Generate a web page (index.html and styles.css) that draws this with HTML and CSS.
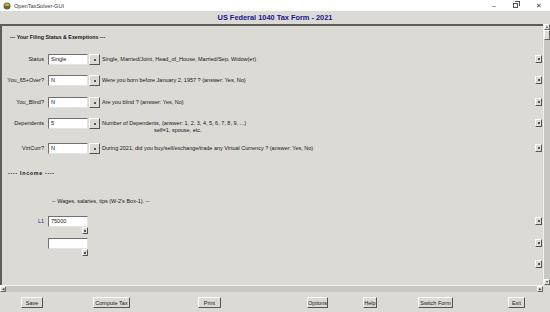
FILE: index.html
```html
<!DOCTYPE html>
<html lang="en">
<head>
  <meta charset="UTF-8" />
  <title>OpenTaxSolver-GUI</title>
  <link rel="stylesheet" href="styles.css">
</head>
<body>
  <div class="window">
    <div class="titlebar">
      <svg class="app-icon" width="8" height="8" viewBox="0 0 8 8">
        <circle cx="4" cy="4" r="3.5" fill="#3d7a3a" />
        <path d="M1 3 L4 1 L7 3 L4 5 Z" fill="#d9a13b" />
        <circle cx="4" cy="5.5" r="1.4" fill="#b8402f" />
      </svg>
      <span class="app-name">OpenTaxSolver-GUI</span>
      <div class="controls">
        <span>&#8211;</span>
        <span class="restore"></span>
        <span>&#10005;</span>
      </div>
    </div>

    <div class="heading">US Federal 1040 Tax Form - 2021</div>

    <div class="main">
      <div class="content">
        <div class="section first">--- Your Filing Status &amp; Exemptions ---</div>

        <div class="row r1">
          <span class="label">Status</span>
          <span class="entry">Single</span>
          <span class="pick"><i></i></span>
          <span class="desc">Single, Married/Joint, Head_of_House, Married/Sep, Widow(er)</span>
          <span class="side"><i></i></span>
        </div>
        <div class="row r2">
          <span class="label">You_65+Over?</span>
          <span class="entry">N</span>
          <span class="pick"><i></i></span>
          <span class="desc">Were you born before January 2, 1957 ? (answer: Yes, No)</span>
          <span class="side"><i></i></span>
        </div>
        <div class="row r3">
          <span class="label">You_Blind?</span>
          <span class="entry">N</span>
          <span class="pick"><i></i></span>
          <span class="desc">Are you blind ? (answer: Yes, No)</span>
          <span class="side"><i></i></span>
        </div>
        <div class="row r4">
          <span class="label">Dependents</span>
          <span class="entry">5</span>
          <span class="pick"><i></i></span>
          <span class="desc two">Number of Dependents, (answer: 1, 2, 3, 4, 5, 6, 7, 8, 9, ...)<br><span class="indent">self=1, spouse, etc.</span></span>
          <span class="side"><i></i></span>
        </div>
        <div class="row r5">
          <span class="label">VirtCurr?</span>
          <span class="entry">N</span>
          <span class="pick"><i></i></span>
          <span class="desc">During 2021, did you buy/sell/exchange/trade any Virtual Currency ? (answer: Yes, No)</span>
          <span class="side"><i></i></span>
        </div>

        <div class="section income">---- Income ----</div>
        <div class="note">-- Wages, salaries, tips (W-2's Box-1). --</div>

        <div class="row l1">
          <span class="label line">L1</span>
          <span class="entry">75000</span>
          <span class="desc"></span>
          <span class="side"><i></i></span>
        </div>
        <div class="mini-row"><span class="mini"><i></i></span></div>
        <div class="row l1b">
          <span class="label"></span>
          <span class="entry"></span>
          <span class="desc"></span>
          <span class="side"><i></i></span>
        </div>
        <div class="mini-row"><span class="mini"><i></i></span></div>
        <div class="row l2">
          <span class="desc"></span>
          <span class="side"><i></i></span>
        </div>
      </div>

      <div class="vscroll">
        <span class="arrow up">&#9650;</span>
        <span class="thumb"></span>
        <span class="track"></span>
        <span class="arrow down">&#9660;</span>
      </div>

      <div class="hscroll">
        <span class="arrow left">&#9664;</span>
        <span class="track"></span>
        <span class="arrow right">&#9654;</span>
      </div>
      <div class="corner"></div>
    </div>

    <div class="footer">
      <button class="save">Save</button>
      <button class="compute">Compute Tax</button>
      <button class="print">Print</button>
      <button class="options">Options</button>
      <button class="help">Help</button>
      <button class="switch">Switch Form</button>
      <button class="exit">Exit</button>
    </div>
  </div>
</body>
</html>
```

FILE: styles.css
```css
* {
  margin: 0;
  padding: 0;
  box-sizing: border-box;
}
body {
  width: 550px;
  height: 312px;
  overflow: hidden;
  background-color: #dcdad5;
  color: #161616;
  font-family: 'Liberation Sans', Arial, sans-serif;
  font-size: 5.5px;
}
.window {
  display: grid;
  grid-template-rows: 11px 13px 268px 20px;
  height: 312px;
}
.titlebar {
  background: #ffffff;
  display: flex;
  align-items: center;
  padding-left: 3px;
  font-size: 5.6px;
  color: #333;
}
.app-icon {
  margin-right: 3px;
}
.controls {
  margin-left: auto;
  display: flex;
  align-items: center;
  font-size: 7px;
  color: #444;
}
.controls span {
  width: 22px;
  text-align: center;
}
.controls .restore {
  width: 5px;
  height: 5px;
  margin: 0 10px 0 8px;
  border: 1px solid #555;
  box-shadow: 1px -1px 0 0 #fff, 2px -2px 0 0 #555;
}
.heading {
  text-align: center;
  font-size: 7.4px;
  font-weight: bold;
  color: #16168f;
  line-height: 13px;
}
.main {
  display: grid;
  grid-template-columns: 543px 7px;
  grid-template-rows: 261px 7px;
}
.content {
  border-top: 2px solid #5e5d5a;
  border-left: 2px solid #5e5d5a;
  overflow: hidden;
  display: flex;
  flex-direction: column;
}
.section {
  font-weight: bold;
  font-size: 5.3px;
  line-height: 8px;
  height: 8px;
  padding-left: 8px;
}
.section.first {
  margin-top: 7px;
}
.section.income {
  margin-top: 15px;
  padding-left: 6px;
  letter-spacing: 0.7px;
}
.note {
  margin-top: 20px;
  line-height: 8px;
  height: 8px;
  padding-left: 50px;
}
.row {
  display: flex;
  align-items: flex-start;
  height: 11px;
}
.r1 { margin-top: 13px; }
.r2 { margin-top: 10px; }
.r3 { margin-top: 11px; }
.r4 { margin-top: 10px; }
.r5 { margin-top: 14px; }
.l1 { margin-top: 11px; }
.l1b { margin-top: 4px; }
.l2 { margin-top: 3px; }
.label {
  width: 42px;
  text-align: right;
  line-height: 11px;
  margin-right: 4px;
  white-space: nowrap;
}
.label.line {
  color: #2a2a8e;
}
.entry {
  width: 40px;
  height: 11px;
  background: #ffffff;
  border-top: 1px solid #707070;
  border-left: 1px solid #707070;
  border-right: 1px solid #e4e3df;
  border-bottom: 1px solid #e4e3df;
  line-height: 9px;
  padding-left: 2px;
}
.pick {
  width: 11px;
  height: 11px;
  margin-left: 1px;
  border-top: 1px solid #ffffff;
  border-left: 1px solid #ffffff;
  border-right: 1px solid #555;
  border-bottom: 1px solid #555;
  display: flex;
  align-items: center;
  justify-content: center;
}
.pick i,
.side i,
.mini i {
  width: 2px;
  height: 2px;
  background: #555;
}
.desc {
  flex: 1;
  margin-left: 2px;
  line-height: 11px;
  white-space: nowrap;
}
.desc.two {
  line-height: 7px;
  padding-top: 2px;
}
.indent {
  padding-left: 52px;
}
.side {
  width: 7px;
  height: 8px;
  margin-top: 1px;
  margin-right: 1px;
  border-top: 1px solid #ffffff;
  border-left: 1px solid #ffffff;
  border-right: 1px solid #555;
  border-bottom: 1px solid #555;
  display: flex;
  align-items: center;
  justify-content: center;
}
.mini-row {
  height: 7px;
  padding-left: 80px;
}
.mini {
  display: flex;
  align-items: center;
  justify-content: center;
  width: 6px;
  height: 7px;
  border-top: 1px solid #ffffff;
  border-left: 1px solid #ffffff;
  border-right: 1px solid #555;
  border-bottom: 1px solid #555;
}
.vscroll {
  grid-row: 1 / 2;
  grid-column: 2 / 3;
  display: flex;
  flex-direction: column;
  background: #c9c7c2;
  border-left: 1px solid #f2f1ee;
}
.hscroll {
  grid-row: 2 / 3;
  grid-column: 1 / 2;
  display: flex;
  background: #c9c7c2;
  border-top: 1px solid #f2f1ee;
}
.corner {
  background: #dcdad5;
}
.arrow {
  width: 6px;
  height: 6px;
  font-size: 3px;
  line-height: 5px;
  text-align: center;
  color: #333;
  background: #dcdad5;
  border-top: 1px solid #ffffff;
  border-left: 1px solid #ffffff;
  border-right: 1px solid #666;
  border-bottom: 1px solid #666;
  overflow: hidden;
}
.thumb {
  height: 10px;
  background: #dcdad5;
  border-top: 1px solid #ffffff;
  border-left: 1px solid #ffffff;
  border-right: 1px solid #666;
  border-bottom: 1px solid #666;
}
.track {
  flex: 1;
}
.footer {
  display: flex;
  align-items: flex-start;
  padding-top: 5px;
  padding-left: 21px;
}
.footer button {
  height: 11px;
  font-family: 'Liberation Sans', Arial, sans-serif;
  font-size: 5.5px;
  color: #161616;
  background: #dcdad5;
  border-top: 1px solid #ffffff;
  border-left: 1px solid #ffffff;
  border-right: 1px solid #555;
  border-bottom: 1px solid #555;
}
.save { width: 22px; }
.compute { width: 37px; margin-left: 50px; }
.print { width: 23px; margin-left: 68px; }
.options { width: 21px; margin-left: 86px; }
.help { width: 14px; margin-left: 35px; }
.switch { width: 35px; margin-left: 41px; }
.exit { width: 17px; margin-left: 55px; }
```
